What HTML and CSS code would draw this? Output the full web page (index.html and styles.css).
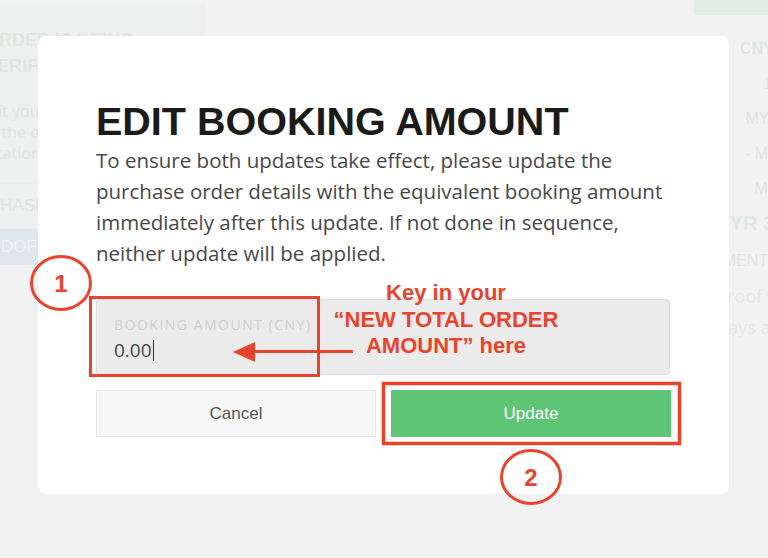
FILE: index.html
```html
<!DOCTYPE html>
<html lang="en">
<head>
<meta charset="utf-8">
<title>Edit booking amount</title>
<link rel="stylesheet" href="styles.css">
</head>
<body>
<div class="app">
  <aside class="side">
    <div class="side-inner">
      <h2 class="side-title">ORDER IS BEING<br>VERIFIED</h2>
      <div class="side-text">
        <div class="st st-1">Submit your</div>
        <div class="st st-2">to the equivalent</div>
        <div class="st st-3">verification</div>
      </div>
      <div class="side-row">PURCHASE ORDER</div>
      <div class="side-btn">DOFORMA</div>
    </div>
  </aside>
  <main class="center"></main>
  <aside class="summary">
    <div class="tag"></div>
    <div class="sum-line sum-cny">CNY 1,000.00</div>
    <div class="sum-line sum-rate">1 : 0.65</div>
    <div class="sum-line">MYR 650.00</div>
    <div class="sum-line">- MYR 20.00</div>
    <div class="sum-line">MYR 0.00</div>
    <div class="sum-line sum-total">MYR 3,630.00</div>
    <div class="sum-line sum-cap">PAYMENT INFORMATION</div>
    <div class="sum-line sum-note sn-1">Upload proof within</div>
    <div class="sum-line sum-note sn-2">within 3 days after</div>
  </aside>
</div>

<div class="modal">
  <h1 class="modal-title">EDIT BOOKING AMOUNT</h1>
  <p class="modal-text">To ensure both updates take effect, please update the purchase order details with the equivalent booking amount immediately after this update. If not done in sequence, neither update will be applied.</p>
  <div class="field">
    <div class="field-label">BOOKING AMOUNT (CNY)</div>
    <div class="field-value">0.00<span class="caret"></span></div>
  </div>
  <div class="actions">
    <button class="btn btn-cancel">Cancel</button>
    <button class="btn btn-update">Update</button>
  </div>
</div>

<svg class="marks" width="768" height="558" viewBox="0 0 768 558">
  <rect x="90.5" y="297.5" width="228" height="78" fill="none" stroke="#e9442b" stroke-width="3"/>
  <rect x="383.5" y="383.5" width="296" height="60" fill="none" stroke="#e9442b" stroke-width="3.5"/>
  <line x1="353" y1="351.5" x2="250" y2="351.5" stroke="#e9442b" stroke-width="3"/>
  <polygon points="233,352 255,342 255,362" fill="#e9442b"/>
  <ellipse cx="61" cy="283" rx="29.5" ry="26.5" fill="none" stroke="#e9442b" stroke-width="3"/>
  <ellipse cx="531" cy="477" rx="29.5" ry="26.5" fill="none" stroke="#e9442b" stroke-width="3"/>
  <text x="61" y="292" class="mark-num">1</text>
  <text x="531" y="486" class="mark-num">2</text>
</svg>
<div class="callout">Key in your<br>“NEW TOTAL ORDER<br>AMOUNT” here</div>
</body>
</html>
```
FILE: styles.css
```css
* { box-sizing: border-box; }
html, body {
  margin: 0;
  padding: 0;
}
body {
  width: 768px;
  height: 558px;
  overflow: hidden;
  position: relative;
  background: #f2f2f2;
  font-family: "Open Sans", "Liberation Sans", sans-serif;
}

/* background page (dimmed) */
.app {
  display: flex;
  height: 558px;
}
.side {
  width: 206px;
  flex: none;
  margin-top: 4px;
  height: 268px;
  background: #eef0ef;
  overflow: hidden;
}
.side-inner {
  padding-top: 23px;
}
.side-title {
  margin: 0 0 0 -15px;
  font: 700 18px/26px "Liberation Sans", Arial, sans-serif;
  color: #dee6e0;
}
.side-text {
  margin-top: 22px;
  font: 400 16px/21px "Open Sans", sans-serif;
  color: #e2e3e2;
  white-space: nowrap;
}
.st-1 { margin-left: -45px; }
.st-2 { margin-left: -18px; }
.st-3 { margin-left: -42px; }
.side-row {
  margin-top: 19px;
  margin-left: -48px;
  border-top: 1px solid #ebeceb;
  padding: 12px 0 0 0;
  height: 46px;
  font: 400 17px/20px "Liberation Sans", Arial, sans-serif;
  color: #e1e2e1;
  white-space: nowrap;
}
.side-btn {
  height: 36px;
  background: #dfe6ee;
  padding: 8px 0 0 1px;
  font: 400 17px/20px "Liberation Sans", Arial, sans-serif;
  color: #eef2f6;
  white-space: nowrap;
  overflow: hidden;
}
.center { flex: 1; }
.summary {
  width: 200px;
  flex: none;
  margin-right: -122px;
  text-align: center;
  font-family: "Liberation Sans", Arial, sans-serif;
  color: #e3e3e3;
}
.tag {
  width: 74px;
  height: 15px;
  margin-left: 4px;
  background: #e0ede3;
}
.sum-line {
  font-size: 16px;
  line-height: 35px;
  white-space: nowrap;
}
.sum-cny {
  margin-top: 16px;
  font-weight: 700;
  color: #dde9df;
}
.sum-total {
  font-size: 20px;
  font-weight: 700;
  color: #dde9df;
  text-align: left;
  margin-left: 23px;
}
.sum-cap {
  font-size: 16px;
  line-height: 40px;
  text-align: left;
  margin-left: 3px;
}
.sum-note {
  font-family: "Open Sans", sans-serif;
  font-size: 18px;
  line-height: 31px;
  color: #e6e6e6;
  text-align: left;
}
.sn-1 { margin-left: -39px; }
.sn-2 { margin-left: -44px; }

/* modal */
.modal {
  position: absolute;
  left: 38px;
  top: 36px;
  width: 691px;
  height: 458px;
  background: #ffffff;
  border-radius: 8px;
  padding: 65px 58px 0 58px;
}
.modal-title {
  margin: 0;
  font: 700 39.5px/40px "Liberation Sans", Arial, sans-serif;
  color: #1b1b1b;
}
.modal-text {
  margin: 4px 0 0 0;
  font: 400 20.5px/31px "Open Sans", sans-serif;
  color: #474747;
}
.field {
  margin-top: 30px;
  height: 76px;
  width: 574px;
  background: #ebebeb;
  border: 1px solid #dedede;
  border-radius: 3px;
  padding: 16px 0 0 17px;
}
.field-label {
  font: 400 14px/17px "Open Sans", sans-serif;
  letter-spacing: 1.5px;
  color: #cfcfcf;
}
.field-value {
  margin-top: 5px;
  font: 400 19px/24px "Open Sans", sans-serif;
  color: #454545;
}
.caret {
  display: inline-block;
  width: 1px;
  height: 21px;
  margin-left: 1px;
  vertical-align: -4px;
  background: #333333;
}
.actions {
  display: flex;
  gap: 15px;
  margin-top: 15px;
}
.btn {
  flex: 1;
  height: 47px;
  font: 400 17px/20px "Liberation Sans", Arial, sans-serif;
  border-radius: 0;
  cursor: pointer;
}
.btn-cancel {
  background: #f7f7f7;
  border: 1px solid #e6e6e6;
  color: #555555;
}
.btn-update {
  background: #5ec577;
  border: 1px solid #5ec577;
  color: #ffffff;
}

/* annotation overlay */
.marks {
  position: absolute;
  left: 0;
  top: 0;
  pointer-events: none;
}
.mark-num {
  font: 700 24px "Liberation Sans", Arial, sans-serif;
  fill: #e9442b;
  text-anchor: middle;
}
.callout {
  position: absolute;
  left: 326px;
  top: 280px;
  width: 240px;
  text-align: center;
  font: 700 22px/26.5px "Liberation Sans", Arial, sans-serif;
  color: #e9442b;
}
```
